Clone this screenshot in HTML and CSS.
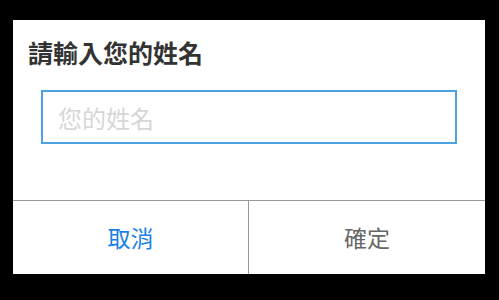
FILE: index.html
```html
<!DOCTYPE html>
<html lang="zh-Hant">
<head>
  <meta charset="UTF-8" />
  <meta name="viewport" content="width=device-width, initial-scale=1.0" />
  <title>請輸入您的姓名</title>
  <link rel="stylesheet" href="styles.css">
</head>
<body>
  <div class="dialog">
    <h1 class="dialog-title">請輸入您的姓名</h1>
    <div class="dialog-body">
      <input class="name-input" type="text" placeholder="您的姓名" />
    </div>
    <div class="dialog-buttons">
      <button class="btn btn-cancel">取消</button>
      <button class="btn btn-ok">確定</button>
    </div>
  </div>
</body>
</html>
```

FILE: styles.css
```css
body {
  margin: 0;
  background: #000;
  font-family: "Noto Sans CJK TC", "Noto Sans", sans-serif;
}

.dialog {
  width: 472px;
  height: 254px;
  margin: 20px 0 0 13px;
  background: #fff;
  display: flex;
  flex-direction: column;
}

.dialog-title {
  margin: 0;
  padding: 20px 0 0 15px;
  font-size: 25px;
  line-height: 24px;
  font-weight: bold;
  color: #333;
}

.dialog-body {
  padding: 26px 0 0 28px;
  flex: 1;
}

.name-input {
  box-sizing: border-box;
  width: 416px;
  height: 54px;
  margin: 0;
  padding: 0 15px;
  border: 2px solid #4ba3e3;
  border-radius: 0;
  outline: none;
  font-family: inherit;
  font-size: 24px;
  color: #333;
}

.name-input::placeholder {
  color: #d6d6d6;
}

.dialog-buttons {
  display: flex;
  height: 74px;
  border-top: 1px solid #999;
  box-sizing: border-box;
}

.btn {
  flex: 1;
  box-sizing: border-box;
  margin: 0;
  padding: 0 0 2px;
  border: none;
  background: #fff;
  font-family: inherit;
  font-size: 23px;
  cursor: pointer;
}

.btn-cancel {
  flex: 0 0 236px;
  border-right: 1px solid #999;
  color: #1a7fe4;
}

.btn-ok {
  color: #666;
}
```
